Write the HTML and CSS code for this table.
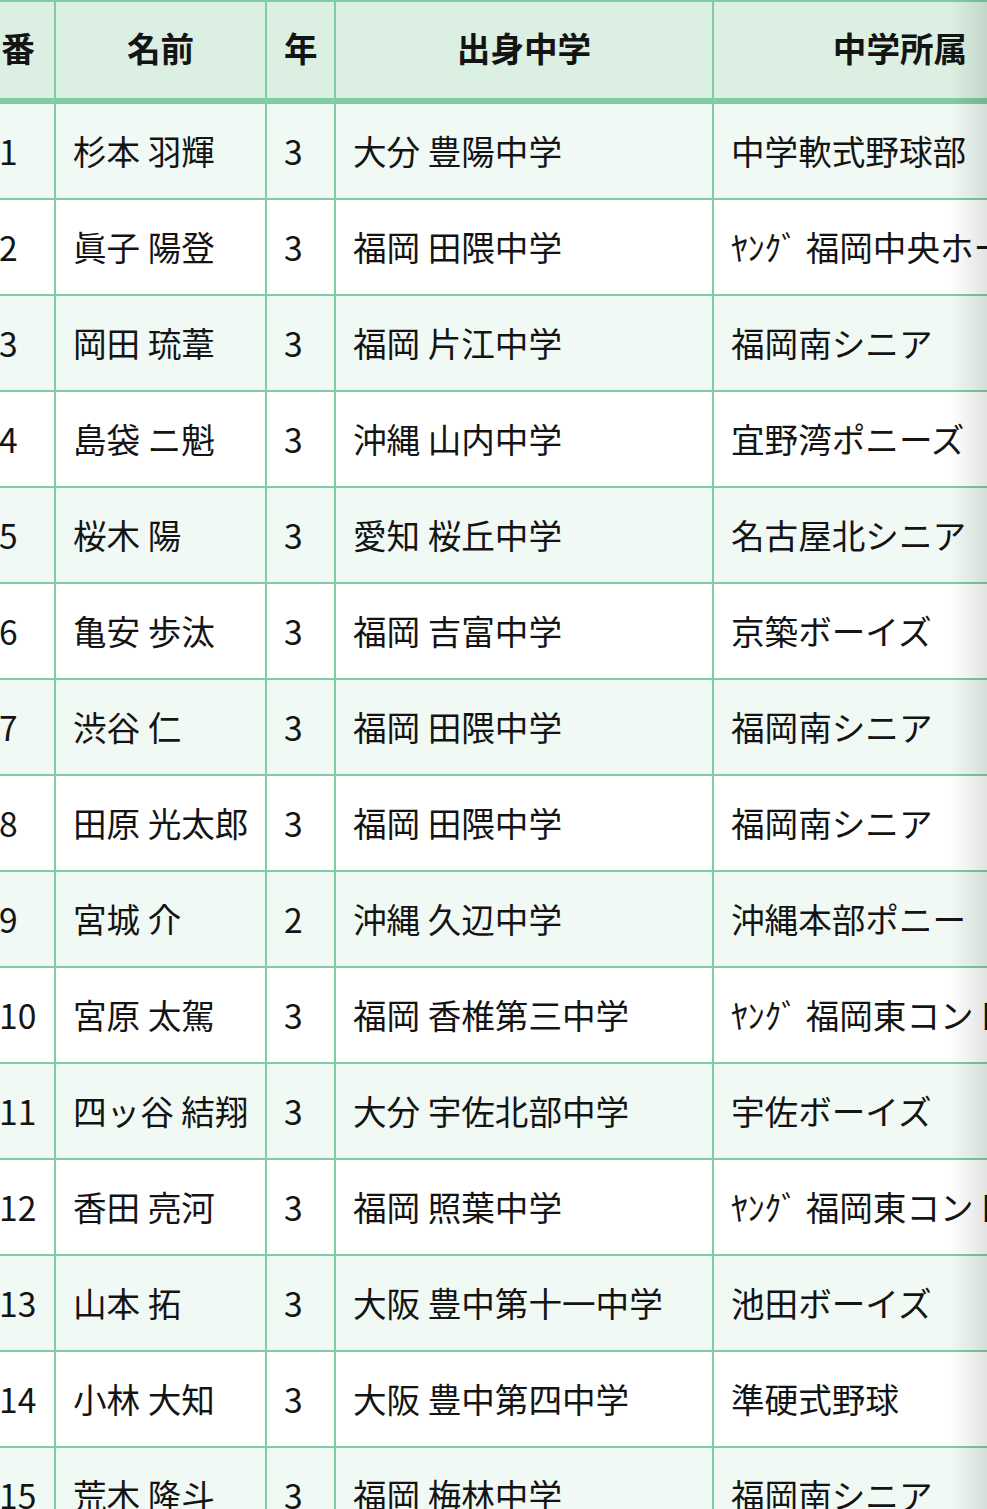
FILE: index.html
```html
<!DOCTYPE html>
<html lang="ja">
<head>
<meta charset="utf-8">
<link rel="stylesheet" href="styles.css">
</head>
<body>
<div class="scroller">
  <table class="roster">
    <colgroup>
      <col class="c-no"><col class="c-name"><col class="c-grade"><col class="c-school"><col class="c-team">
    </colgroup>
    <thead>
      <tr><th>番</th><th>名前</th><th>年</th><th>出身中学</th><th>中学所属</th></tr>
    </thead>
    <tbody>
      <tr><td>1</td><td>杉本 羽輝</td><td>3</td><td>大分 豊陽中学</td><td>中学軟式野球部</td></tr>
      <tr><td>2</td><td>眞子 陽登</td><td>3</td><td>福岡 田隈中学</td><td>ﾔﾝｸﾞ 福岡中央ホークス</td></tr>
      <tr><td>3</td><td>岡田 琉葦</td><td>3</td><td>福岡 片江中学</td><td>福岡南シニア</td></tr>
      <tr><td>4</td><td>島袋 ニ魁</td><td>3</td><td>沖縄 山内中学</td><td>宜野湾ポニーズ</td></tr>
      <tr><td>5</td><td>桜木 陽</td><td>3</td><td>愛知 桜丘中学</td><td>名古屋北シニア</td></tr>
      <tr><td>6</td><td>亀安 歩汰</td><td>3</td><td>福岡 吉富中学</td><td>京築ボーイズ</td></tr>
      <tr><td>7</td><td>渋谷 仁</td><td>3</td><td>福岡 田隈中学</td><td>福岡南シニア</td></tr>
      <tr><td>8</td><td>田原 光太郎</td><td>3</td><td>福岡 田隈中学</td><td>福岡南シニア</td></tr>
      <tr><td>9</td><td>宮城 介</td><td>2</td><td>沖縄 久辺中学</td><td>沖縄本部ポニー</td></tr>
      <tr><td>10</td><td>宮原 太駕</td><td>3</td><td>福岡 香椎第三中学</td><td>ﾔﾝｸﾞ 福岡東コントロール</td></tr>
      <tr><td>11</td><td>四ッ谷 結翔</td><td>3</td><td>大分 宇佐北部中学</td><td>宇佐ボーイズ</td></tr>
      <tr><td>12</td><td>香田 亮河</td><td>3</td><td>福岡 照葉中学</td><td>ﾔﾝｸﾞ 福岡東コントロール</td></tr>
      <tr><td>13</td><td>山本 拓</td><td>3</td><td>大阪 豊中第十一中学</td><td>池田ボーイズ</td></tr>
      <tr><td>14</td><td>小林 大知</td><td>3</td><td>大阪 豊中第四中学</td><td>準硬式野球</td></tr>
      <tr><td>15</td><td>荒木 隆斗</td><td>3</td><td>福岡 梅林中学</td><td>福岡南シニア</td></tr>
    </tbody>
  </table>
  <div class="fade"></div>
</div>
</body>
</html>
```

FILE: styles.css
```css
html, body {
  margin: 0;
  padding: 0;
  background: #ffffff;
}

.scroller {
  position: relative;
  width: 987px;
  height: 1509px;
  overflow: hidden;
}

.roster {
  margin-left: -20px;
  border-collapse: separate;
  border-spacing: 0;
  table-layout: fixed;
  width: 1106px;
  border-top: 2px solid #80cda1;
  border-left: 2px solid #80cda1;
  font-family: "Noto Sans CJK JP", "Noto Sans", sans-serif;
  font-size: 33.6px;
  color: #141414;
}

.c-no { width: 74px; }
.c-name { width: 211px; }
.c-grade { width: 69px; }
.c-school { width: 378px; }
.c-team { width: 374px; }

.roster th,
.roster td {
  border-right: 2px solid #80cda1;
  border-bottom: 2px solid #80cda1;
  padding: 0 17px;
  white-space: nowrap;
  overflow: hidden;
  line-height: 1.2;
}

.roster th {
  background: #dbf0e3;
  font-weight: 700;
  text-align: center;
  border-bottom-width: 6px;
  box-sizing: border-box;
  height: 102px;
  padding-bottom: 4px;
}

.roster td {
  height: 96px;
  box-sizing: border-box;
  text-align: left;
  font-weight: 400;
}

.roster tbody tr:nth-child(odd) td {
  background: #f0f9f4;
}

.roster tbody tr:nth-child(even) td {
  background: #ffffff;
}

.fade {
  position: absolute;
  top: 0;
  right: 0;
  width: 38px;
  height: 100%;
  background: linear-gradient(to right, rgba(0, 0, 0, 0), rgba(0, 0, 0, 0.11));
  pointer-events: none;
}
```
